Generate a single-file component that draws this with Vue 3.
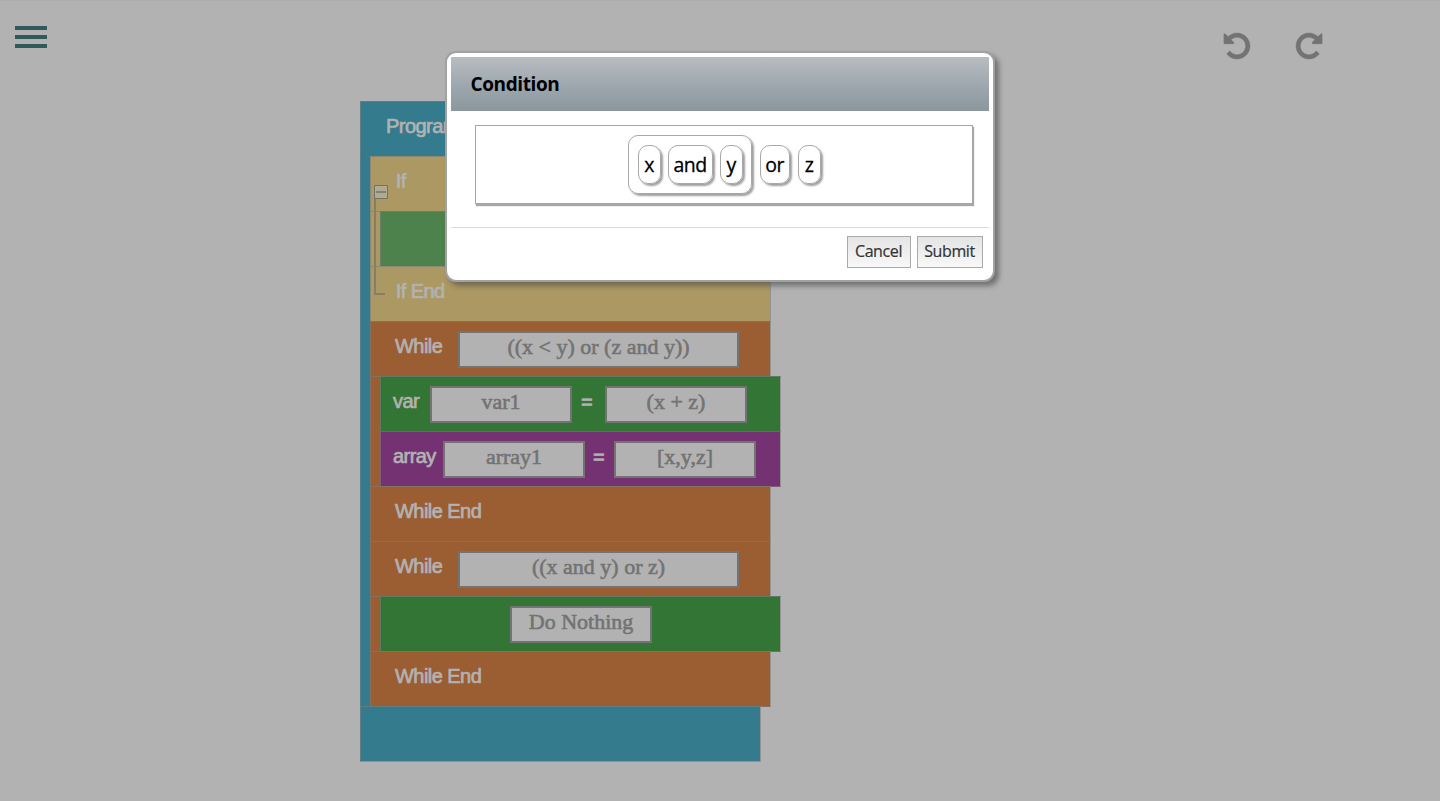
<script setup>
const undoPath = 'M1536 896q0 156-61 298t-164 245-245 164-298 61q-172 0-327-72.5t-264-204.5q-7-10-6.5-22.5t8.5-20.5l137-138q10-9 25-9 16 2 23 12 73 95 179 147t225 52q104 0 198.5-40.5t163.5-109.5 109.5-163.5 40.5-198.5-40.5-198.5-109.5-163.5-163.5-109.5-198.5-40.5q-98 0-188 35.5t-160 101.5l137 138q31 30 14 69-17 40-59 40h-448q-26 0-45-19t-19-45v-448q0-42 40-59 39-17 69 14l130 129q107-101 244.5-156.5t284.5-55.5q156 0 298 61t245 164 164 245 61 298z'
const arrowPath = 'M0 160L580 740H0z'
</script>

<template>
  <div class="page">
    <header class="toolbar">
      <div class="menu"><i></i><i></i><i></i></div>
      <div class="history">
        <svg viewBox="0 128 1536 1536"><path :d="undoPath" /><path :d="arrowPath" /></svg>
        <svg class="redo" viewBox="0 128 1536 1536"><path :d="undoPath" /><path :d="arrowPath" /></svg>
      </div>
    </header>

    <main class="program">
      <div class="row teal head"><span class="label">Program</span></div>
      <div class="body">
        <div class="row tan"><span class="label">If</span></div>
        <div class="nested tan">
          <div class="row leaf"></div>
        </div>
        <div class="row tan"><span class="label">If End</span></div>
        <div class="row orange">
          <span class="label while">While</span><span class="field wide">((x &lt; y) or (z and y))</span>
        </div>
        <div class="nested orange">
          <div class="row green">
            <span class="label var">var</span><span class="field">var1</span>
            <span class="label eq">=</span><span class="field">(x + z)</span>
          </div>
          <div class="row purple">
            <span class="label array">array</span><span class="field">array1</span>
            <span class="label eq narrow">=</span><span class="field">[x,y,z]</span>
          </div>
        </div>
        <div class="row orange"><span class="label">While End</span></div>
        <div class="row orange">
          <span class="label while">While</span><span class="field wide">((x and y) or z)</span>
        </div>
        <div class="nested orange">
          <div class="row green nothing"><span class="field">Do Nothing</span></div>
        </div>
        <div class="row orange"><span class="label">While End</span></div>
        <div class="fold"><b></b></div>
      </div>
      <div class="row teal foot"></div>
    </main>

    <section class="dialog">
      <h2><span>Condition</span></h2>
      <div class="expression">
        <div class="group">
          <span class="chip">x</span><span class="chip and">and</span><span class="chip">y</span>
        </div>
        <span class="chip or">or</span><span class="chip">z</span>
      </div>
      <footer>
        <button class="cancel">Cancel</button><button class="submit">Submit</button>
      </footer>
    </section>
  </div>
</template>

<style>
body { background: #b2b2b2; overflow: hidden; }
</style>

<style scoped>
* { box-sizing: border-box; }
.page { position: relative; width: 1440px; height: 801px; background: #b2b2b2; border-top: 1px solid #adadad; overflow: hidden; }
.toolbar { height: 100px; display: flex; justify-content: space-between; padding: 25px 118px 0 15px; }
.menu { display: flex; flex-direction: column; gap: 5px; }
.menu i { width: 32px; height: 4px; background: #305a5a; }
.history { display: flex; gap: 46px; padding-top: 7px; }
.history svg { width: 26px; height: 26px; fill: #737373; stroke: #737373; stroke-width: 24; overflow: visible; }
.redo { transform: scaleX(-1); }

.program { width: 400px; margin-left: 360px; }
.row { display: flex; width: 401px; height: 56px; margin-bottom: -1px; border: 1px solid rgba(125, 125, 125, .62); border-right-color: #929392; padding-left: 24px; position: relative; }
.foot { border-bottom-color: #929392; }
.body { position: relative; padding-left: 10px; background: #347b8e; border-left: 1px solid #547f89; width: 400px; }
.body > .row, .body > .nested { margin-left: -1px; }
.nested { width: 11px; padding-left: 10px; border: 1px solid rgba(125, 125, 125, .62); border-right: 0; border-bottom: 0; }
.nested > .row { margin-top: -1px; margin-left: -1px; padding-left: 12px; }
.nested > .row + .row { margin-top: 0; }
.teal { background: #347b8e; }
.tan { background: #ab9862; }
.orange { background: #9b5d32; }
.leaf { background: #4e824c; }
.green { background: #337534; }
.purple { background: #743272; }
.nothing { padding-left: 129px !important; }
.label { font: 20px/24px "Liberation Sans", Arial, sans-serif; letter-spacing: -.55px; color: #b2b2b2; -webkit-text-stroke: .7px #b2b2b2; padding-top: 12px; white-space: nowrap; flex: none; }
.head .label { margin-left: 1px; }
.tan .label { margin-left: .7px; }
.while { width: 63px; }
.var { width: 37px; }
.array { width: 50px; }
.eq { width: 33px; text-align: center; padding-right: 4px; padding-top: 13px; }
.narrow { width: 29px; padding-right: 2px; }
.field { margin-top: 9px; width: 142px; height: 37px; border: 2px solid #737373; background: #b2b2b2; color: #737373; font: 22px/27px "Liberation Serif", "Times New Roman", serif; -webkit-text-stroke: .6px #737373; text-align: center; flex: none; }
.wide { width: 281px; }
.fold { position: absolute; left: 13px; top: 42px; width: 11px; height: 97px; border-left: 2px solid #877f63; border-bottom: 2px solid #877f63; }
.fold b { position: absolute; left: -2px; top: -13px; width: 14px; height: 14px; background: #b1aa92; border: 1px solid #737369; }
.fold b::after { content: ""; position: absolute; left: 1px; right: 1px; top: 5px; height: 2px; background: #85816f; }

.dialog { position: absolute; left: 445px; top: 50px; width: 550px; height: 231px; padding: 4px; background: #fff; border: 2px solid #a0a1a1; border-radius: 11px; box-shadow: 4px 4px 5px rgba(70, 70, 70, .58); font-family: "Open Sans", "Noto Sans", sans-serif; color: #000; }
h2 { margin: 0; height: 54px; padding: 13px 20px 0; background: linear-gradient(#b8bdc0, #9da6ae 55%, #8a979c); font: 700 19px/28px "Open Sans", "Noto Sans", sans-serif; letter-spacing: -.4px; text-indent: -.5px; }
.expression { margin: 14px 16px 0 24px; height: 79px; border: 1px solid #a3a6a5; box-shadow: 1px 2px 1px #a6a8a7; display: flex; align-items: flex-start; padding: 9px 0 0 152px; }
.group { display: flex; height: 59px; width: 124px; padding: 9px; gap: 7px; border: 1px solid #a8a8a8; border-radius: 10px; box-shadow: 2px 2px 2px #a0a0a0; margin-right: 8px; }
.chip { width: 23px; height: 39px; border: 1px solid #a8a8a8; border-radius: 10px; box-shadow: 2px 2px 2px #a0a0a0; text-align: center; font-size: 19.5px; line-height: 38px; letter-spacing: -.6px; text-indent: -1px; -webkit-text-stroke: .3px #000; flex: none; }
.and { width: 45px; }
.expression > .chip { margin-top: 10px; }
.or { width: 30px; margin-right: 8px; }
footer { margin-top: 23px; border-top: 1px solid #dcdcdc; padding: 8px 6px 0; display: flex; justify-content: flex-end; gap: 6px; }
button { height: 32px; padding: 0 1px 2px 0; border: 1px solid #aaa; background: linear-gradient(#e4e4e4, #f8f8f8); color: #333; font: 16px/28px "Open Sans", "Noto Sans", sans-serif; letter-spacing: -.4px; -webkit-text-stroke: .2px #333; }
.cancel { width: 64px; }
.submit { width: 66px; }
</style>
